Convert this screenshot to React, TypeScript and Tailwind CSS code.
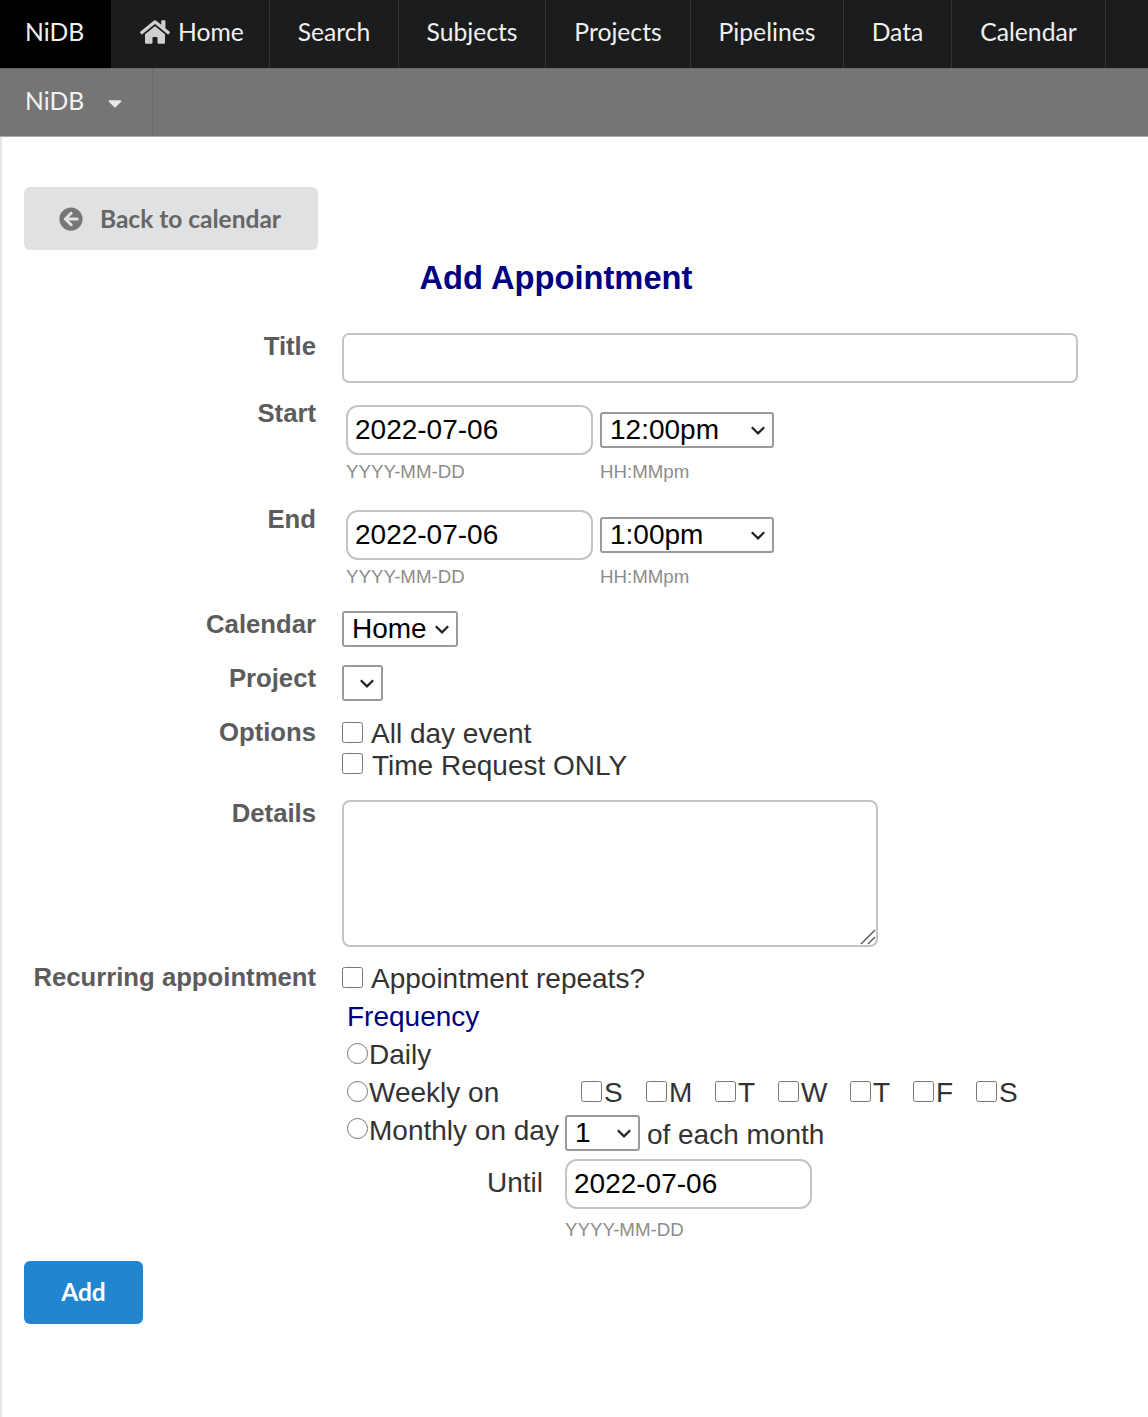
import { ReactNode } from "react"
import { FaHome, FaArrowCircleLeft, FaCaretDown } from "react-icons/fa"

const navItems = [
  { n: "Search", w: "w-[129px]" },
  { n: "Subjects", w: "w-[147px]" },
  { n: "Projects", w: "w-[145px]" },
  { n: "Pipelines", w: "w-[153px]" },
  { n: "Data", w: "w-[108px]" },
  { n: "Calendar", w: "w-[154px]" },
]
const days = [
  { l: "S", w: "w-[65px]" },
  { l: "M", w: "w-[69px]" },
  { l: "T", w: "w-[63px]" },
  { l: "W", w: "w-[72px]" },
  { l: "T", w: "w-[63px]" },
  { l: "F", w: "w-[63px]" },
  { l: "S", w: "w-[50px]" },
]

function Row({ label, className, children }: { label: string; className: string; children: ReactNode }) {
  return (
    <div className={`flex ${className}`}>
      <div className="w-[292px] shrink-0 text-right text-[25.7px] leading-[30px] font-bold text-[#5c5c5c]">{label}</div>
      <div className="ml-[26px] flex-1">{children}</div>
    </div>
  )
}

function Select({ value, className }: { value: string; className: string }) {
  return (
    <div className={`relative h-[36px] shrink-0 rounded-[3px] border-2 border-[#9a9a9a] bg-white text-[28px] leading-[32px] text-black ${className}`}>
      <select className="h-full w-full appearance-none bg-transparent pl-[8px] outline-none" defaultValue={value}>
        <option>{value}</option>
      </select>
      <svg viewBox="0 0 16 16" className="pointer-events-none absolute right-[5px] top-[7px] h-[18px] w-[18px]" fill="none" stroke="#222222" strokeWidth="2">
        <path d="M2.5 5.5 8 11l5.5-5.5" />
      </svg>
    </div>
  )
}

function DateInput({ className = "" }: { className?: string }) {
  return (
    <input
      type="text"
      defaultValue="2022-07-06"
      className={`h-[50px] w-[247px] rounded-[12px] border-2 border-[#c4c4c4] bg-white pl-[7px] text-[28px] text-black outline-none ${className}`}
    />
  )
}

function Hint({ children, className = "" }: { children: ReactNode; className?: string }) {
  return <div className={`text-[18.7px] leading-[24px] text-[#8c8c8c] ${className}`}>{children}</div>
}

function Check({ className = "" }: { className?: string }) {
  return <input type="checkbox" className={`m-0 h-[21px] w-[21px] shrink-0 ${className}`} />
}

function Radio({ className = "" }: { className?: string }) {
  return <input type="radio" name="freq" className={`m-0 h-[21px] w-[21px] shrink-0 ${className}`} />
}

export default function App() {
  return (
    <div className="min-h-[1417px] border-l-2 border-[#e6e6e6] bg-white font-['Liberation_Sans',Arial,sans-serif] text-[#333333]">
      <div className="-ml-[2px] flex h-[68px] bg-[#1b1c1d] font-['Lato',sans-serif] text-[24.7px] text-[#f0f0f0]">
        <div className="flex w-[111px] items-center bg-black pb-[4px] pl-[25px]">NiDB</div>
        <div className="flex w-[159px] items-center gap-[8px] border-r border-[#333436] pb-[4px] pl-[29px]">
          <FaHome className="text-[30px] text-[#cfcfcf]" />
          Home
        </div>
        {navItems.map((item) => (
          <div key={item.n} className={`flex items-center justify-center border-r border-[#333436] pb-[4px] ${item.w}`}>{item.n}</div>
        ))}
      </div>

      <div className="-ml-[2px] flex h-[69px] border-y border-[#666666] border-b-[#aaaaaa] bg-[#757575] font-['Lato',sans-serif] text-[24.7px] text-[#f2f2f2]">
        <div className="flex w-[153px] items-center border-r border-[#6a6a6a] pb-[3px] pl-[25px]">
          NiDB
          <FaCaretDown className="mt-[3px] ml-[20px] text-[22px] text-[#e8e8e8]" />
        </div>
      </div>

      <div className="pl-[22px]">
        <button className="mt-[50px] flex h-[63px] w-[294px] items-center rounded-[6px] bg-[#e0e1e2] pl-[35px] font-['Lato',sans-serif] text-[24.5px] font-bold text-[#666666]">
          <FaArrowCircleLeft className="text-[24px] text-[#777777]" />
          <span className="mt-[2px] ml-[17px]">Back to calendar</span>
        </button>

        <h1 className="mt-[8px] w-[1064px] text-center text-[32.7px] leading-[40px] font-bold text-[#000080]">Add Appointment</h1>

        <Row label="Title" className="mt-[33px]">
          <input type="text" className="mt-[2px] block h-[50px] w-[736px] rounded-[7px] border-2 border-[#c4c4c4] bg-white outline-none" />
        </Row>

        <Row label="Start" className="mt-[15px]">
          <div className="mt-[7px] ml-[4px] flex items-start gap-[7px]">
            <div>
              <DateInput />
              <Hint className="mt-[5px]">YYYY-MM-DD</Hint>
            </div>
            <div>
              <Select value="12:00pm" className="mt-[7px] w-[174px]" />
              <Hint className="mt-[12px]">HH:MMpm</Hint>
            </div>
          </div>
        </Row>

        <Row label="End" className="mt-[20px]">
          <div className="mt-[6px] ml-[4px] flex items-start gap-[7px]">
            <div>
              <DateInput />
              <Hint className="mt-[5px]">YYYY-MM-DD</Hint>
            </div>
            <div>
              <Select value="1:00pm" className="mt-[7px] w-[174px]" />
              <Hint className="mt-[12px]">HH:MMpm</Hint>
            </div>
          </div>
        </Row>

        <Row label="Calendar" className="mt-[20px]">
          <Select value="Home" className="mt-[2px] w-[116px]" />
        </Row>

        <Row label="Project" className="mt-[16px]">
          <Select value="" className="mt-[2px] w-[41px]" />
        </Row>

        <Row label="Options" className="mt-[16px]">
          <div className="flex h-[32px] items-center">
            <Check className="-mt-[2px]" />
            <span className="mt-[2px] ml-[8px] text-[28px] leading-[32px]">All day event</span>
          </div>
          <div className="flex h-[32px] items-center">
            <Check className="-mt-[4px]" />
            <span className="mt-[2px] ml-[9px] text-[28px] leading-[32px]">Time Request ONLY</span>
          </div>
        </Row>

        <Row label="Details" className="mt-[17px]">
          <div className="relative mt-[2px] h-[147px] w-[536px]">
            <textarea className="block h-full w-full resize-none rounded-[8px] border-2 border-[#c4c4c4] bg-white outline-none" />
            <svg viewBox="0 0 16 16" className="pointer-events-none absolute right-[2px] bottom-[2px] h-[16px] w-[16px]" fill="none" stroke="#555555" strokeWidth="1.4">
              <path d="M1 15 15 1M8 15l7-7" />
            </svg>
          </div>
        </Row>

        <Row label="Recurring appointment" className="mt-[15px]">
          <div className="flex h-[32px] items-center">
            <Check className="-mt-[2px]" />
            <span className="mt-[1px] ml-[8px] text-[28px] leading-[32px]">Appointment repeats?</span>
          </div>
          <div className="mt-[7px] ml-[5px] text-[28px] leading-[32px] text-[#000080]">Frequency</div>
          <div className="mt-[6px] flex h-[32px] items-center pl-[5px] text-[28px] leading-[32px]">
            <Radio className="-mt-[4px]" />
            <span className="ml-[1px]">Daily</span>
          </div>
          <div className="mt-[6px] flex h-[32px] items-center pl-[5px] text-[28px] leading-[32px]">
            <Radio className="-mt-[4px]" />
            <span className="ml-[1px] w-[212px]">Weekly on</span>
            {days.map((d, i) => (
              <div key={i} className={`flex items-center ${d.w}`}>
                <Check className="-mt-[4px]" />
                <span className="ml-[2px]">{d.l}</span>
              </div>
            ))}
          </div>
          <div className="mt-[6px] flex items-start pl-[5px] text-[28px] leading-[32px]">
            <Radio className="mt-[3px]" />
            <span className="ml-[1px]">Monthly on day</span>
            <Select value="1" className="ml-[6px] w-[75px]" />
            <span className="mt-[4px] ml-[7px]">of each month</span>
          </div>
          <div className="mt-[8px] flex items-start">
            <div className="mt-[8px] w-[201px] text-right text-[28px] leading-[32px]">Until</div>
            <div className="ml-[22px]">
              <DateInput />
              <Hint className="mt-[9px]">YYYY-MM-DD</Hint>
            </div>
          </div>
        </Row>

        <button className="mt-[19px] flex h-[63px] w-[119px] items-center justify-center rounded-[6px] bg-[#2185d0] font-['Lato',sans-serif] text-[24.5px] font-bold text-white">
          Add
        </button>
      </div>
    </div>
  )
}
